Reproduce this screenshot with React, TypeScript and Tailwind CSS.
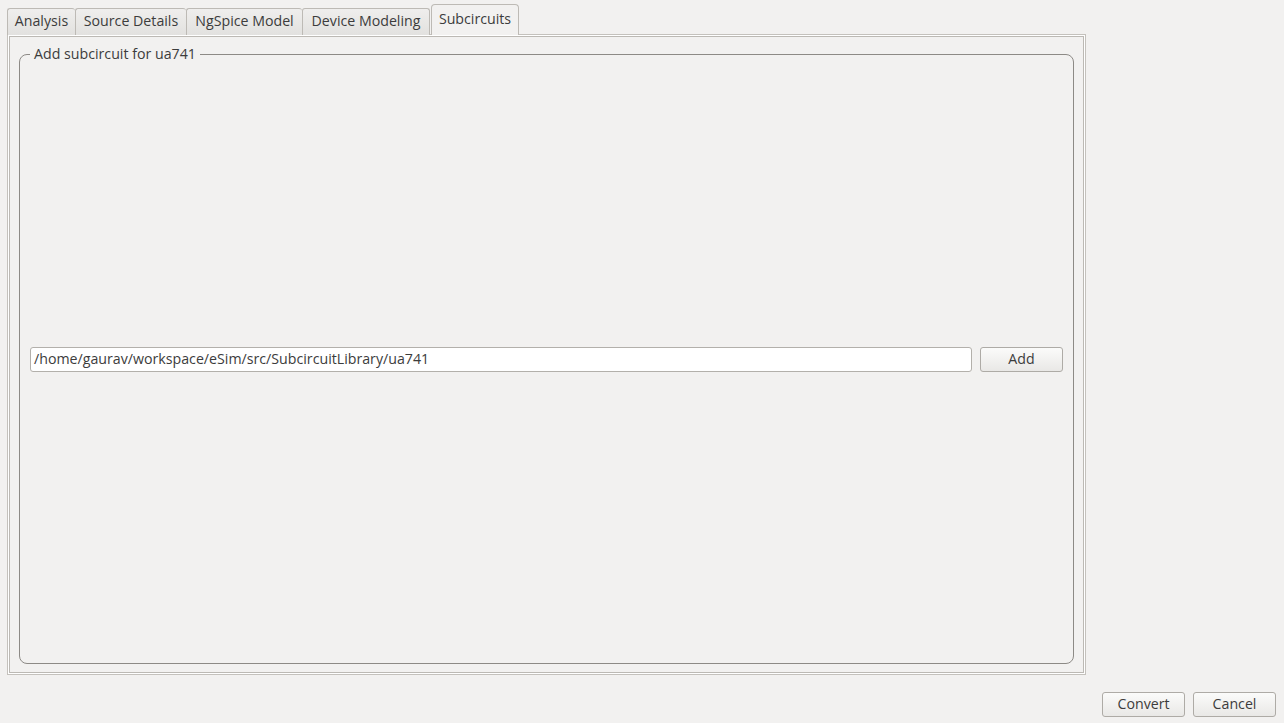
import React from "react";

const tabs = [
  { label: "Analysis", w: 68, r: false },
  { label: "Source Details", w: 111, r: false },
  { label: "NgSpice Model", w: 116, r: false },
  { label: "Device Modeling", w: 128, r: true },
];

function Btn({ label }: { label: string }) {
  return (
    <button className="w-[83px] h-[25px] rounded-[3px] border border-[#aeaba6] bg-gradient-to-b from-[#fbfbfa] to-[#e9e8e6] text-[14.2px] text-[#3c3c3c] leading-none flex items-center justify-center">
      {label}
    </button>
  );
}

export default function App() {
  return (
    <div
      className="w-[1284px] h-[723px] bg-[#f2f1f0] text-[#3c3c3c] overflow-hidden flex flex-col"
      style={{ fontFamily: '"Open Sans", "DejaVu Sans", sans-serif' }}
    >
      {/* tab bar */}
      <div className="flex items-end pl-[7px] pt-[4px] -mb-px relative z-10">
        {tabs.map((t) => (
          <div
            key={t.label}
            style={{ width: t.w }}
            className={`h-[27px] border-l border-t border-[#bdbab5] ${t.r ? "border-r" : ""} rounded-t-[3px] bg-gradient-to-b from-[#efeeed] to-[#e2e1df] text-[14.2px] flex items-center justify-center pb-[2px]`}
          >
            {t.label}
          </div>
        ))}
        <div className="w-[88px] h-[31px] border border-[#bdbab5] border-b-0 rounded-t-[4px] bg-[#f2f1f0] text-[14.2px] flex items-center justify-center ml-px pb-[3px]">
          Subcircuits
        </div>
      </div>

      {/* panel */}
      <div className="ml-[7px] w-[1079px] h-[641px] border border-[#c4c1bc] p-px bg-white">
        <div className="w-full h-full border border-[#bcb9b4] bg-[#f2f1f0] pt-[17px] pl-[9px]">
          <div className="relative w-[1055px] h-[610px] border border-[#8d8a86] rounded-[8px] flex items-center pl-[10px] pr-[10px] gap-[8px]">
            <div className="absolute left-[10px] -top-[10px] px-[4px] bg-[#f2f1f0] text-[14.2px] leading-[18px]">
              Add subcircuit for ua741
            </div>
            <div className="w-[942px] h-[25px] bg-white border border-[#b3b0ab] rounded-[3px] flex items-center pl-[3px] text-[14.2px]">
              /home/gaurav/workspace/eSim/src/SubcircuitLibrary/ua741
            </div>
            <Btn label="Add" />
          </div>
        </div>
      </div>

      {/* bottom buttons */}
      <div className="flex justify-end gap-[8px] pr-[8px] mt-[17px]">
        <Btn label="Convert" />
        <Btn label="Cancel" />
      </div>
    </div>
  );
}
